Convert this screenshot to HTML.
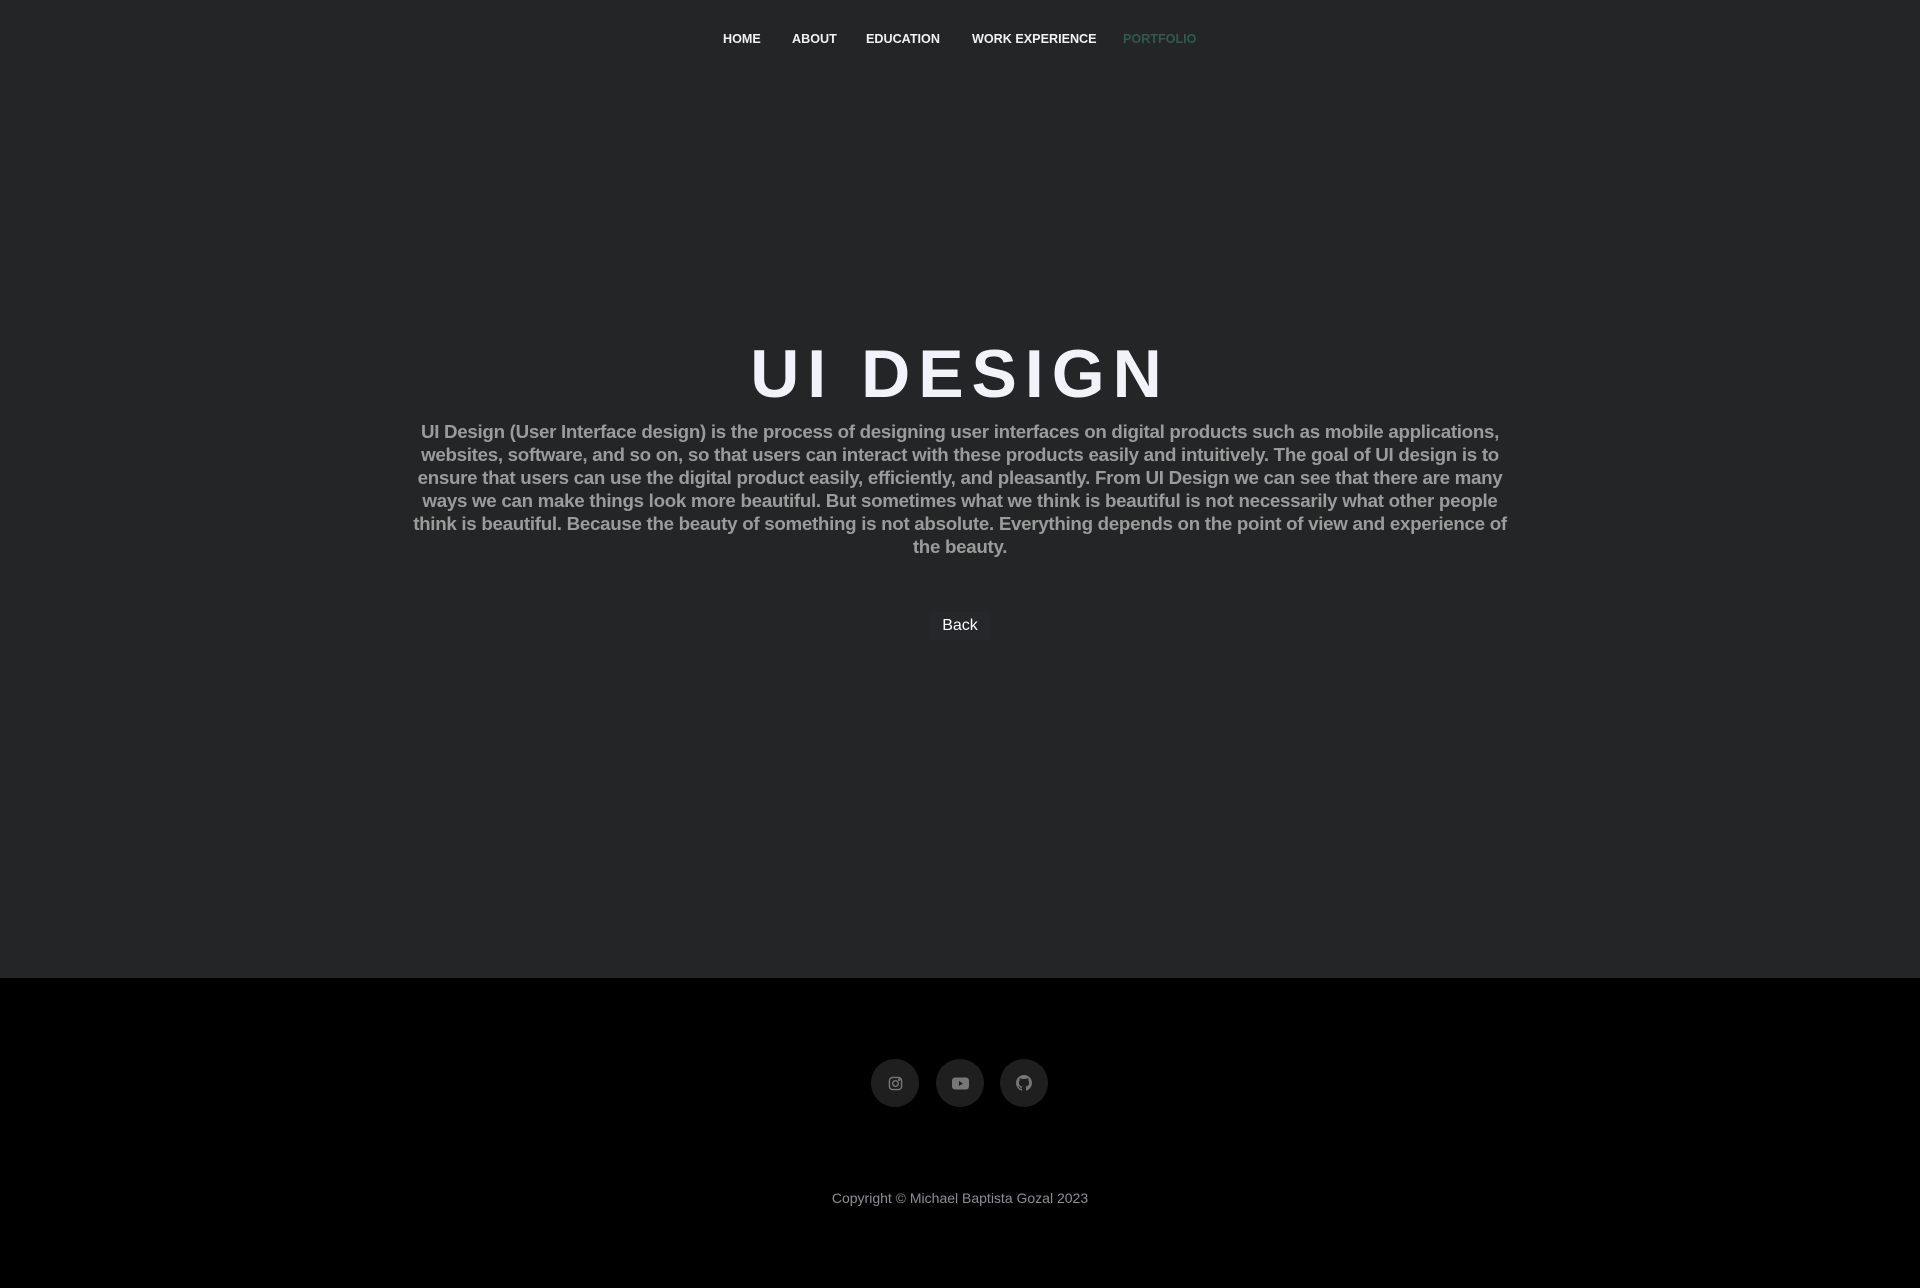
<!DOCTYPE html>
<html><head><meta charset="utf-8"><style>
html,body{margin:0;padding:0}
body{width:1920px;height:1288px;background:#232526;font-family:"Liberation Sans",sans-serif;position:relative;overflow:hidden}
nav{position:absolute;top:32px;left:0;width:1920px;height:20px}
nav a{position:absolute;font-weight:bold;font-size:12.6px;color:#f2f2f2;text-decoration:none;white-space:nowrap}
h1{position:absolute;top:334px;left:0;width:1920px;text-align:center;margin:0;font-size:68px;letter-spacing:8px;color:#f0f4fa;font-weight:bold;line-height:80px}
p{position:absolute;top:420px;left:400px;width:1120px;margin:0;text-align:center;color:#9b9b9b;font-size:18.75px;line-height:23px;font-weight:bold;letter-spacing:-0.3px}
.back{position:absolute;top:612px;left:930px;width:60px;height:28px;line-height:28px;text-align:center;color:#fff;font-size:16px;background:#25272a}
footer{position:absolute;top:978px;left:0;width:1920px;height:310px;background:#000}
.ic{position:absolute;top:81px;width:48px;height:48px;border-radius:50%;background:#1f1f1f;display:flex;align-items:center;justify-content:center}
.copy{position:absolute;top:212px;width:1920px;text-align:center;color:#8a8f99;font-size:14px}
</style></head><body>
<nav>
<a style="left:723px">HOME</a>
<a style="left:792px">ABOUT</a>
<a style="left:866px">EDUCATION</a>
<a style="left:972px">WORK EXPERIENCE</a>
<a style="left:1123px;color:#2f5a4d">PORTFOLIO</a>
</nav>
<h1>UI DESIGN</h1>
<p>UI Design (User Interface design) is the process of designing user interfaces on digital products such as mobile applications, websites, software, and so on, so that users can interact with these products easily and intuitively. The goal of UI design is to ensure that users can use the digital product easily, efficiently, and pleasantly. From UI Design we can see that there are many ways we can make things look more beautiful. But sometimes what we think is beautiful is not necessarily what other people think is beautiful. Because the beauty of something is not absolute. Everything depends on the point of view and experience of the beauty.</p>
<div class="back">Back</div>
<footer>
<div class="ic" style="left:871px"><svg width="15" height="15" viewBox="0 0 16 16" fill="none" stroke="#777" stroke-width="1.5"><rect x="1.5" y="1.5" width="13" height="13" rx="3.5"/><circle cx="8" cy="8" r="3"/><circle cx="12" cy="4" r=".6" fill="#777"/></svg></div>
<div class="ic" style="left:936px"><svg width="17" height="13" viewBox="0 0 17 13"><rect x="0" y="0.5" width="17" height="12" rx="3" fill="#777"/><path d="M7 4 L11 6.5 L7 9Z" fill="#1f1f1f"/></svg></div>
<div class="ic" style="left:1000px"><svg width="16" height="16" viewBox="0 0 16 16"><path fill="#777" d="M8 0C3.58 0 0 3.580 0 8c0 3.54 2.290 6.53 5.47 7.59.4.07.55-.17.55-.38 0-.19-.01-.82-.01-1.49-2.01.37-2.530-.49-2.690-.94-.09-.23-.48-.94-.82-1.13-.28-.15-.68-.52-.01-.53.63-.01 1.080.58 1.230.82.72 1.21 1.870.87 2.330.66.07-.52.28-.87.51-1.07-1.78-.2-3.640-.89-3.640-3.95 0-.87.31-1.59.82-2.150-.08-.2-.36-1.02.08-2.12 0 0 .67-.21 2.2.82.64-.18 1.320-.27 2-.27.68 0 1.360.09 2 .27 1.53-1.04 2.2-.82 2.2-.82.44 1.1.16 1.92.08 2.12.51.56.82 1.270.82 2.150 0 3.070-1.870 3.750-3.650 3.950.29.25.54.73.54 1.48 0 1.070-.01 1.930-.01 2.2 0 .21.15.46.55.38A8.013 8.013 0 0016 8c0-4.42-3.58-8-8-8z"/></svg></div>
<div class="copy">Copyright © Michael Baptista Gozal 2023</div>
</footer>
</body></html>
